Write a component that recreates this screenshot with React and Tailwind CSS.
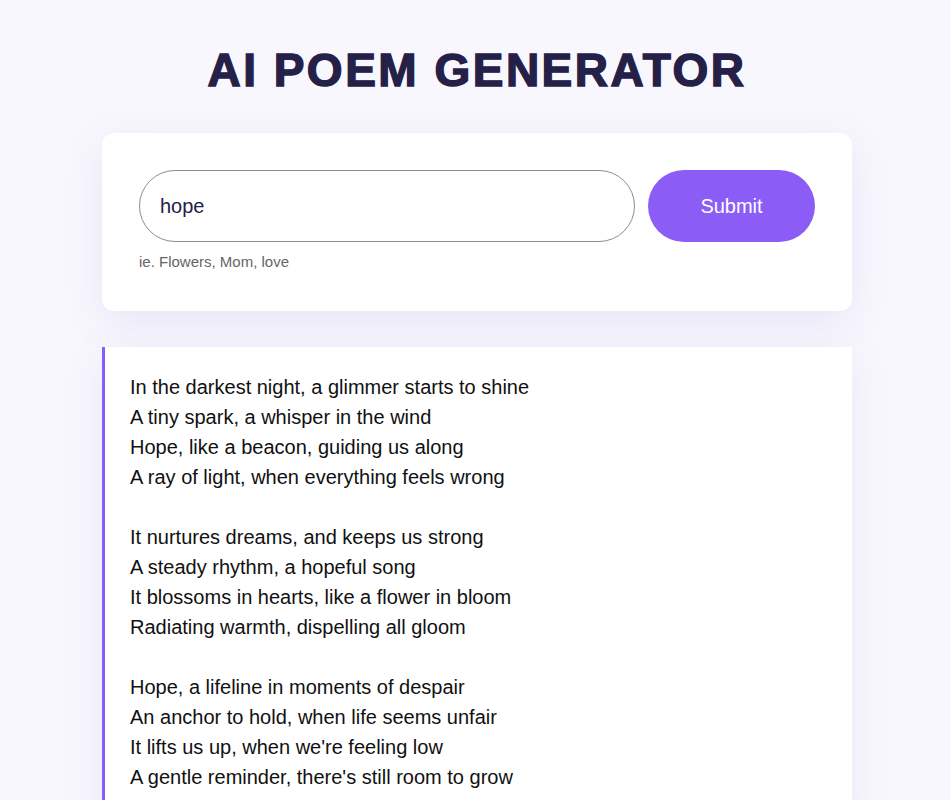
import React, { useState } from 'react';

const poem = [
  'In the darkest night, a glimmer starts to shine',
  'A tiny spark, a whisper in the wind',
  'Hope, like a beacon, guiding us along',
  'A ray of light, when everything feels wrong',
  '',
  'It nurtures dreams, and keeps us strong',
  'A steady rhythm, a hopeful song',
  'It blossoms in hearts, like a flower in bloom',
  'Radiating warmth, dispelling all gloom',
  '',
  'Hope, a lifeline in moments of despair',
  'An anchor to hold, when life seems unfair',
  "It lifts us up, when we're feeling low",
  "A gentle reminder, there's still room to grow",
];

export default function App() {
  const [topic, setTopic] = useState('hope');

  return (
    <div className="min-h-screen bg-[#f8f7fd] font-['Liberation_Sans',Arial,sans-serif] pt-[41px] pl-[4px]">
      <h1 className="text-center text-[46px] leading-[58px] font-bold tracking-[2.5px] text-[#252048] [-webkit-text-stroke:1.4px_#252048]">
        AI POEM GENERATOR
      </h1>

      <div className="w-[750px] mx-auto mt-[34px] bg-white rounded-xl px-[37px] pt-[37px] pb-[38px] shadow-[0_10px_40px_rgba(120,100,200,0.12)]">
        <div className="flex gap-[13px]">
          <input
            value={topic}
            onChange={(e) => setTopic(e.target.value)}
            className="flex-1 h-[72px] rounded-full border border-[#8e8c9a] px-[20px] text-[20px] text-[#252048] outline-none"
          />
          <button className="w-[167px] h-[72px] rounded-full bg-[#8b5cf6] text-white text-[20px]">
            Submit
          </button>
        </div>
        <p className="mt-[9px] text-[15px] leading-[22px] text-[#666]">ie. Flowers, Mom, love</p>
      </div>

      <div className="w-[750px] mx-auto mt-[36px] bg-white border-l-[3px] border-[#8b5cf6] pl-[25px] pr-6 pt-[25px] pb-8 shadow-[0_10px_40px_rgba(120,100,200,0.1)]">
        {poem.map((line, i) => (
          <p key={i} className="text-[20px] leading-[30px] text-[#111] min-h-[30px]">
            {line}
          </p>
        ))}
      </div>
    </div>
  );
}
